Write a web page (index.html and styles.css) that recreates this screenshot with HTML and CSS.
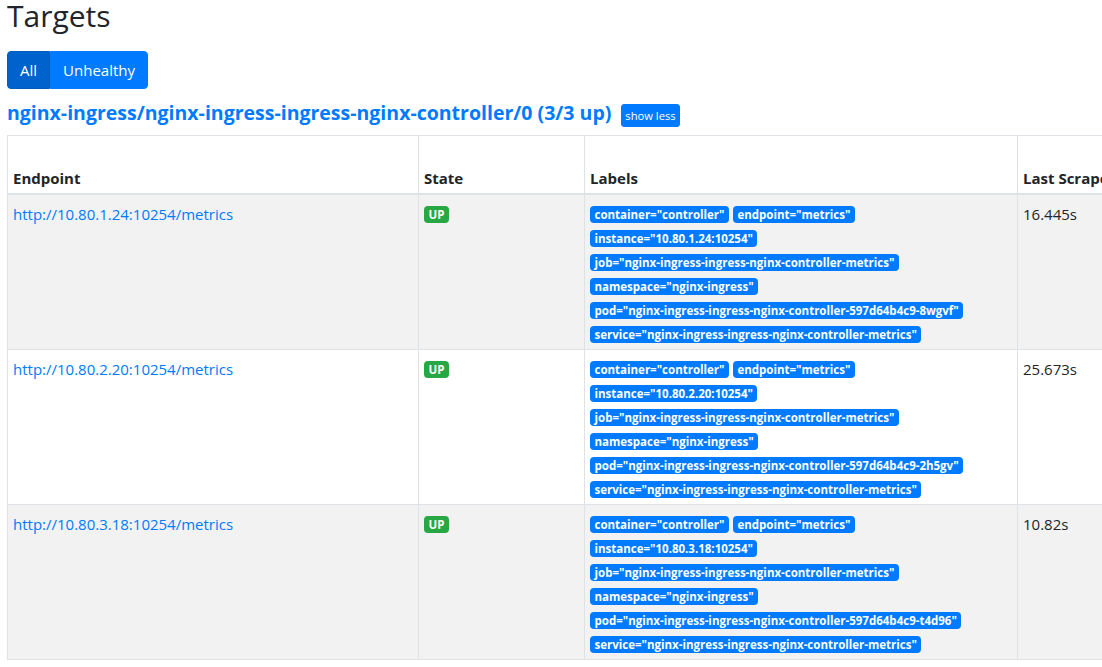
FILE: index.html
```html
<!DOCTYPE html>
<html lang="en">
<head>
<meta charset="utf-8">
<title>Targets</title>
<link rel="stylesheet" href="styles.css">
</head>
<body>
<div class="page">
  <h1 class="title">Targets</h1>
  <div class="btn-group">
    <button class="btn btn-active">All</button><button class="btn">Unhealthy</button>
  </div>
  <div class="pool-head">
    <h2 class="pool-title"><a href="#">nginx-ingress/nginx-ingress-ingress-nginx-controller/0 (3/3 up)</a></h2>
    <button class="btn-xs">show less</button>
  </div>
  <table class="targets">
    <colgroup>
      <col class="c-endpoint"><col class="c-state"><col class="c-labels"><col class="c-scrape"><col class="c-duration"><col class="c-error">
    </colgroup>
    <thead>
      <tr><th>Endpoint</th><th>State</th><th>Labels</th><th>Last Scrape</th><th>Scrape Duration</th><th>Error</th></tr>
    </thead>
    <tbody>
      <tr class="striped">
        <td><a href="#">http://10.80.1.24:10254/metrics</a></td>
        <td><span class="badge badge-up">UP</span></td>
        <td class="labels"><span class="badge">container="controller"</span> <span class="badge">endpoint="metrics"</span> <span class="badge">instance="10.80.1.24:10254"</span> <span class="badge">job="nginx-ingress-ingress-nginx-controller-metrics"</span> <span class="badge">namespace="nginx-ingress"</span> <span class="badge">pod="nginx-ingress-ingress-nginx-controller-597d64b4c9-8wgvf"</span> <span class="badge">service="nginx-ingress-ingress-nginx-controller-metrics"</span></td>
        <td>16.445s</td>
        <td>12.1ms</td>
        <td></td>
      </tr>
      <tr>
        <td><a href="#">http://10.80.2.20:10254/metrics</a></td>
        <td><span class="badge badge-up">UP</span></td>
        <td class="labels"><span class="badge">container="controller"</span> <span class="badge">endpoint="metrics"</span> <span class="badge">instance="10.80.2.20:10254"</span> <span class="badge">job="nginx-ingress-ingress-nginx-controller-metrics"</span> <span class="badge">namespace="nginx-ingress"</span> <span class="badge">pod="nginx-ingress-ingress-nginx-controller-597d64b4c9-2h5gv"</span> <span class="badge">service="nginx-ingress-ingress-nginx-controller-metrics"</span></td>
        <td>25.673s</td>
        <td>10.4ms</td>
        <td></td>
      </tr>
      <tr class="striped">
        <td><a href="#">http://10.80.3.18:10254/metrics</a></td>
        <td><span class="badge badge-up">UP</span></td>
        <td class="labels"><span class="badge">container="controller"</span> <span class="badge">endpoint="metrics"</span> <span class="badge">instance="10.80.3.18:10254"</span> <span class="badge">job="nginx-ingress-ingress-nginx-controller-metrics"</span> <span class="badge">namespace="nginx-ingress"</span> <span class="badge">pod="nginx-ingress-ingress-nginx-controller-597d64b4c9-t4d96"</span> <span class="badge">service="nginx-ingress-ingress-nginx-controller-metrics"</span></td>
        <td>10.82s</td>
        <td>11.7ms</td>
        <td></td>
      </tr>
    </tbody>
  </table>
</div>
</body>
</html>
```
FILE: styles.css
```css
html, body {
  margin: 0;
  padding: 0;
  overflow: hidden;
  background: #fff;
}
body {
  font-family: "Open Sans", "Noto Sans", sans-serif;
  font-size: 15px;
  line-height: 24px;
  color: #212529;
}
.page {
  padding-left: 7px;
  width: 1400px;
}
.title {
  margin: 0 0 19px;
  font-size: 30px;
  line-height: 32px;
  font-weight: 400;
  color: #212529;
}
.btn-group {
  display: inline-flex;
}
.btn {
  font-family: inherit;
  font-size: 15px;
  line-height: 24px;
  padding: 6px 12px;
  border: 1px solid #007bff;
  background: #007bff;
  color: #fff;
  margin: 0;
  cursor: pointer;
}
.btn:first-child {
  border-radius: 4px 0 0 4px;
}
.btn:last-child {
  border-radius: 0 4px 4px 0;
}
.btn-active {
  background: #0062cc;
  border-color: #005cbf;
}
.pool-head {
  display: flex;
  align-items: flex-start;
  gap: 10px;
  margin: 12px 0 10px;
  height: 24px;
}
.pool-title {
  margin: 0;
  font-size: 19.5px;
  line-height: 24px;
  font-weight: 700;
}
.pool-title a {
  color: #007bff;
  text-decoration: none;
}
.btn-xs {
  font-family: inherit;
  font-size: 11.2px;
  line-height: 21px;
  height: 23px;
  padding: 0 3px;
  margin-top: 3px;
  border: 1px solid #007bff;
  background: #007bff;
  color: #fff;
  border-radius: 3px;
}
.targets {
  border-collapse: collapse;
  table-layout: fixed;
  width: 1300px;
}
.c-endpoint { width: 411px; }
.c-state { width: 166px; }
.c-labels { width: 433px; }
.c-scrape { width: 130px; }
.c-duration { width: 100px; }
.c-error { width: 60px; }
.targets th,
.targets td {
  border: 1px solid #dee2e6;
  text-align: left;
}
.targets th {
  height: 49px;
  padding: 5px 5px 3px;
  vertical-align: bottom;
  font-weight: 700;
  border-bottom: 2px solid #dee2e6;
  white-space: nowrap;
}
.targets td {
  padding: 7px 5px 3px;
  vertical-align: top;
}
.targets tr.striped td {
  background: #f2f2f2;
}
.targets td a {
  color: #007bff;
  text-decoration: none;
}
.badge {
  display: inline-block;
  font-size: 11.5px;
  font-weight: 700;
  line-height: 11px;
  padding: 3px 4.5px;
  border-radius: 4px;
  background: #007bff;
  color: #fff;
  white-space: nowrap;
  vertical-align: 1px;
}
.badge-up {
  background: #28a745;
}
```
